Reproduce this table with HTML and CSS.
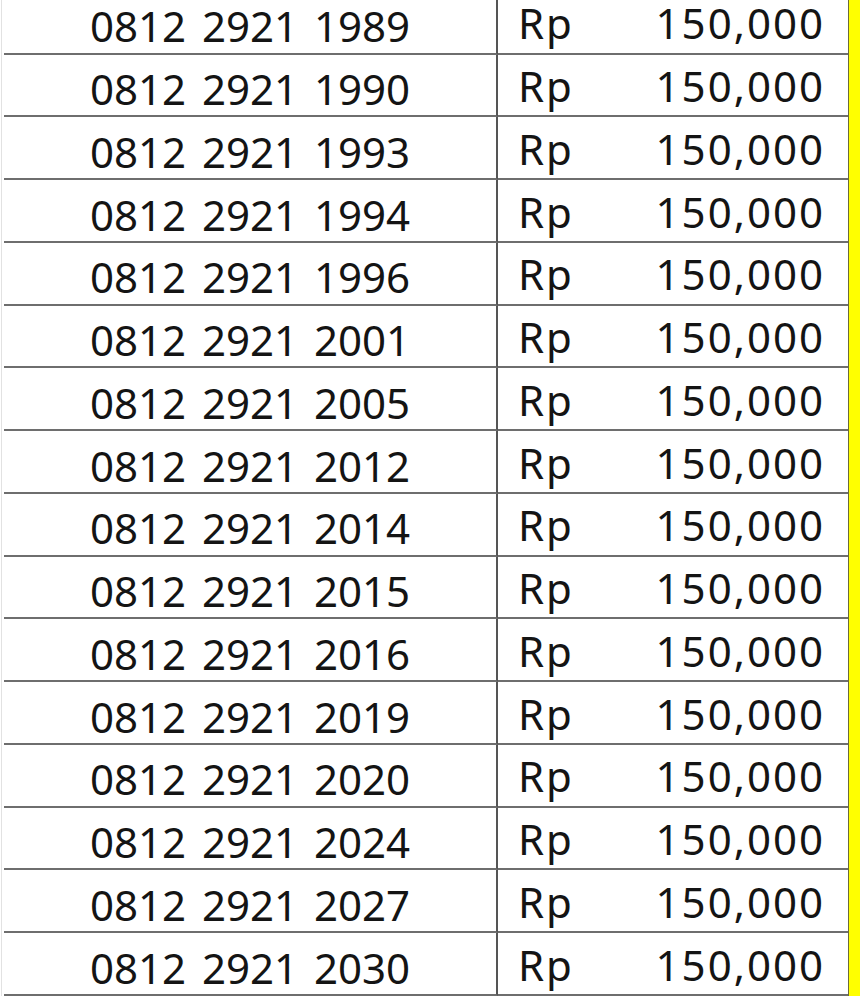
FILE: index.html
```html
<!DOCTYPE html>
<html lang="id">
<head>
<meta charset="utf-8">
<title>Daftar Nomor</title>
<link rel="stylesheet" href="styles.css">
</head>
<body>
<div class="sheet">
  <div class="row"><div class="num">0812 2921 1989</div><div class="price"><span>Rp</span><span>150,000</span></div><div class="mark"></div></div>
  <div class="row"><div class="num">0812 2921 1990</div><div class="price"><span>Rp</span><span>150,000</span></div><div class="mark"></div></div>
  <div class="row"><div class="num">0812 2921 1993</div><div class="price"><span>Rp</span><span>150,000</span></div><div class="mark"></div></div>
  <div class="row"><div class="num">0812 2921 1994</div><div class="price"><span>Rp</span><span>150,000</span></div><div class="mark"></div></div>
  <div class="row"><div class="num">0812 2921 1996</div><div class="price"><span>Rp</span><span>150,000</span></div><div class="mark"></div></div>
  <div class="row"><div class="num">0812 2921 2001</div><div class="price"><span>Rp</span><span>150,000</span></div><div class="mark"></div></div>
  <div class="row"><div class="num">0812 2921 2005</div><div class="price"><span>Rp</span><span>150,000</span></div><div class="mark"></div></div>
  <div class="row"><div class="num">0812 2921 2012</div><div class="price"><span>Rp</span><span>150,000</span></div><div class="mark"></div></div>
  <div class="row"><div class="num">0812 2921 2014</div><div class="price"><span>Rp</span><span>150,000</span></div><div class="mark"></div></div>
  <div class="row"><div class="num">0812 2921 2015</div><div class="price"><span>Rp</span><span>150,000</span></div><div class="mark"></div></div>
  <div class="row"><div class="num">0812 2921 2016</div><div class="price"><span>Rp</span><span>150,000</span></div><div class="mark"></div></div>
  <div class="row"><div class="num">0812 2921 2019</div><div class="price"><span>Rp</span><span>150,000</span></div><div class="mark"></div></div>
  <div class="row"><div class="num">0812 2921 2020</div><div class="price"><span>Rp</span><span>150,000</span></div><div class="mark"></div></div>
  <div class="row"><div class="num">0812 2921 2024</div><div class="price"><span>Rp</span><span>150,000</span></div><div class="mark"></div></div>
  <div class="row"><div class="num">0812 2921 2027</div><div class="price"><span>Rp</span><span>150,000</span></div><div class="mark"></div></div>
  <div class="row"><div class="num">0812 2921 2030</div><div class="price"><span>Rp</span><span>150,000</span></div><div class="mark"></div></div>
</div>
</body>
</html>
```
FILE: styles.css
```css
html, body {
  margin: 0;
  padding: 0;
  background: #ffffff;
  overflow: hidden;
}
body {
  height: 1000px;
  font-family: "Noto Sans", "Open Sans", sans-serif;
  color: #141414;
}
.sheet {
  margin-top: -8.2px;
  margin-left: 1px;
  padding-left: 2px;
  border-left: 1px solid #e2e2e2;
  display: flex;
  flex-direction: column;
}
.row {
  display: grid;
  grid-template-columns: 494px 350px 13px;
  height: 62.75px;
}
.num, .price {
  box-sizing: border-box;
  border-bottom: 2px solid #6e6e6e;
  display: flex;
  align-items: flex-end;
  font-size: 42px;
  line-height: 42px;
  white-space: nowrap;
}
.num {
  justify-content: center;
  padding-bottom: 5.3px;
  word-spacing: 5px;
  border-right: 2px solid #555555;
}
.price {
  justify-content: space-between;
  padding-bottom: 8.3px;
  padding-left: 20px;
  padding-right: 23px;
  letter-spacing: 2px;
}
.mark {
  background: #ffff00;
  border-left: 1.5px solid #6b6b3a;
}
```
